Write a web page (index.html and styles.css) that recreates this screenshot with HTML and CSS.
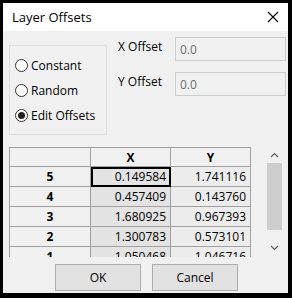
FILE: index.html
```html
<!DOCTYPE html>
<html lang="en">
<head>
  <meta charset="UTF-8">
  <title>Layer Offsets</title>
  <link rel="stylesheet" href="styles.css">
</head>
<body>
  <div class="window">
    <div class="titlebar">
      <span class="title">Layer Offsets</span>
      <svg class="close" width="12" height="12" viewBox="0 0 12 12">
        <path d="M1 1 L11 11 M11 1 L1 11" stroke="#000" stroke-width="1.1" fill="none"/>
      </svg>
    </div>

    <div class="content">
      <div class="top">
        <div class="group">
          <label class="radio"><span class="dot"></span>Constant</label>
          <label class="radio"><span class="dot"></span>Random</label>
          <label class="radio"><span class="dot on"></span>Edit Offsets</label>
        </div>
        <div class="fields">
          <div class="field">
            <span class="label">X Offset</span>
            <div class="input">0.0</div>
          </div>
          <div class="field">
            <span class="label">Y Offset</span>
            <div class="input">0.0</div>
          </div>
        </div>
      </div>

      <div class="grid-box">
        <div class="grid-clip">
          <table class="grid">
            <tr>
              <th class="corner"></th>
              <th>X</th>
              <th>Y</th>
            </tr>
            <tr><th>5</th><td class="cx sel">0.149584</td><td class="cy">1.741116</td></tr>
            <tr><th>4</th><td class="cx">0.457409</td><td class="cy">0.143760</td></tr>
            <tr><th>3</th><td class="cx">1.680925</td><td class="cy">0.967393</td></tr>
            <tr><th>2</th><td class="cx">1.300783</td><td class="cy">0.573101</td></tr>
            <tr><th>1</th><td class="cx">1.050468</td><td class="cy">1.046716</td></tr>
          </table>
        </div>
        <div class="scrollbar">
          <svg class="arrow" width="9" height="6" viewBox="0 0 9 6">
            <path d="M1 5 L4.5 1.5 L8 5" stroke="#606060" stroke-width="1.2" fill="none"/>
          </svg>
          <div class="thumb"></div>
          <svg class="arrow" width="9" height="6" viewBox="0 0 9 6">
            <path d="M1 1 L4.5 4.5 L8 1" stroke="#606060" stroke-width="1.2" fill="none"/>
          </svg>
        </div>
      </div>

      <div class="buttons">
        <button class="btn">OK</button>
        <button class="btn">Cancel</button>
      </div>
    </div>
  </div>
</body>
</html>
```

FILE: styles.css
```css
body {
  margin: 0;
  padding: 3px 0 0 3px;
  background: #000;
  font-family: 'Open Sans', 'Noto Sans', sans-serif;
  font-size: 12px;
  color: #000;
  overflow: hidden;
}

.window {
  width: 285px;
  height: 290px;
  background: #f0f0f0;
  display: flex;
  flex-direction: column;
  overflow: hidden;
}

.titlebar {
  height: 28px;
  flex: none;
  background: #fff;
  display: flex;
  align-items: center;
  justify-content: space-between;
  padding: 0 9px 0 9px;
}

.title {
  font-size: 13px;
}

.content {
  flex: 1;
  padding: 6px 2px 0 6px;
  display: flex;
  flex-direction: column;
}

.top {
  display: flex;
  height: 98px;
  flex: none;
}

.group {
  margin-top: 8px;
  width: 98px;
  height: 90px;
  box-sizing: border-box;
  border: 1px solid #dcdcdc;
  display: flex;
  flex-direction: column;
  justify-content: center;
  gap: 9px;
  padding: 0 0 0 5px;
}

.radio {
  display: flex;
  align-items: center;
  gap: 3px;
  height: 16px;
}

.dot {
  width: 11px;
  height: 11px;
  border: 1px solid #333;
  border-radius: 50%;
  background: #fff;
  display: flex;
  align-items: center;
  justify-content: center;
}

.dot.on::after {
  content: '';
  width: 7px;
  height: 7px;
  border-radius: 50%;
  background: #222;
}

.fields {
  margin-left: 11px;
  display: flex;
  flex-direction: column;
  gap: 11px;
}

.field {
  display: flex;
  align-items: center;
}

.label {
  width: 57px;
  margin-top: -5px;
}

.input {
  width: 111px;
  height: 24px;
  box-sizing: border-box;
  border: 1px solid #cccccc;
  background: #f0f0f0;
  color: #6d6d6d;
  padding: 3px 0 0 4px;
}

.grid-box {
  margin-top: 12px;
  height: 110px;
  flex: none;
  display: flex;
}

.grid-clip {
  width: 257px;
  height: 110px;
  overflow: hidden;
}

.grid {
  border-collapse: collapse;
  table-layout: fixed;
}

.grid th,
.grid td {
  border: 1px solid #a0a0a0;
  height: 20px;
  padding: 0 4px;
  box-sizing: border-box;
}

.grid th {
  width: 81px;
  text-align: center;
  font-weight: bold;
  background: #f0f0f0;
}

.grid tr:first-child th {
  height: 19px;
}

.grid tr:first-child th + th {
  width: 80px;
}

.grid td {
  text-align: right;
  width: 80px;
}

.cx {
  background: #e3e3e3;
}

.cy {
  background: #ececec;
}

.grid td.sel {
  outline: 2px solid #000;
  outline-offset: -2px;
}

.scrollbar {
  width: 17px;
  display: flex;
  flex-direction: column;
  align-items: center;
  padding-top: 5px;
  box-sizing: border-box;
}

.thumb {
  width: 15px;
  height: 67px;
  background: #cdcdcd;
  margin: 5px 0 15px;
}

.buttons {
  margin-top: 7px;
  display: flex;
  justify-content: center;
  gap: 11px;
  padding-right: 2px;
}

.btn {
  width: 86px;
  height: 27px;
  background: #e1e1e1;
  border: 1px solid #adadad;
  font-family: 'Open Sans', 'Noto Sans', sans-serif;
  font-size: 12px;
  color: #000;
  padding: 0;
}
```
